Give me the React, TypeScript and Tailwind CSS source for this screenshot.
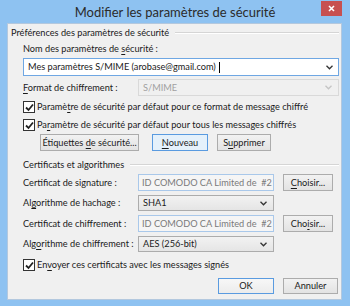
import type { ReactNode } from 'react';

const font = "font-['Lato','Liberation_Sans',sans-serif]";

function Chevron({ color = '#333' }: { color?: string }) {
  return (
    <svg width="7" height="5" viewBox="0 0 7 5" className="shrink-0">
      <polyline points="0.5,0.8 3.5,3.8 6.5,0.8" fill="none" stroke={color} strokeWidth="1.3" />
    </svg>
  );
}

function CheckBox({ children }: { children: ReactNode }) {
  return (
    <div className="flex items-center h-[16px] pl-[15px]">
      <div className="w-[12px] h-[12px] border border-[#333] bg-white flex items-center justify-center">
        <svg width="9" height="9" viewBox="0 0 9 9">
          <polyline points="1,4.5 3.5,7 8,1.5" fill="none" stroke="#222" strokeWidth="1.8" />
        </svg>
      </div>
      <span className="ml-[2px] whitespace-nowrap">{children}</span>
    </div>
  );
}

function Button({
  children,
  width,
  isDefault,
}: {
  children: ReactNode;
  width: string;
  isDefault?: boolean;
}) {
  return (
    <div
      className={`${width} h-full flex items-center justify-center whitespace-nowrap border ${
        isDefault
          ? 'border-[#5a9be0] bg-[#e5f1fb]'
          : 'border-[#acacac] bg-linear-to-b from-[#f2f2f2] to-[#e3e3e3]'
      }`}
    >
      {children}
    </div>
  );
}

function GroupTitle({ children, indent }: { children: ReactNode; indent: string }) {
  return (
    <div className={`flex items-center h-[12px] ${indent} pr-[2px]`}>
      <span className="whitespace-nowrap">{children}</span>
      <div className="flex-1 ml-[6px] h-[2px] border-t border-[#d5d5d5] border-b border-b-white" />
    </div>
  );
}

function ReadOnlyField({ text }: { text: string }) {
  return (
    <div className="w-[136px] h-full border border-[#a9c8ea] bg-[#f5f5f5] text-[#7a7a7a] flex items-center pl-[3px] whitespace-pre">
      {text}
    </div>
  );
}

function Select({ text }: { text: string }) {
  return (
    <div className="w-[136px] h-full border border-[#acacac] bg-linear-to-b from-[#f2f2f2] to-[#e5e5e5] flex items-center pl-[4px] pr-[6px]">
      <span className="flex-1 whitespace-nowrap">{text}</span>
      <Chevron />
    </div>
  );
}

export default function App() {
  return (
    <div className={`w-[350px] h-[306px] bg-[#8ec2f1] flex flex-col ${font}`}>
      <div className="relative h-[23px] flex items-center justify-center">
        <span className="text-[13px] text-[#2b2b2b] mt-[2px]">
          Modifier les paramètres de sécurité
        </span>
        <div className="absolute right-[8px] top-[1px] w-[21px] h-[15px] bg-[#c75050] flex items-center justify-center">
          <svg width="7" height="7" viewBox="0 0 7 7">
            <path d="M1 1L6 6M6 1L1 6" stroke="#fff" strokeWidth="1.6" />
          </svg>
        </div>
      </div>

      <div className="ml-[7px] mr-[8px] h-[277px] bg-[#f0f0f0] border border-[#b3c8de] text-[9.2px] text-[#1a1a1a] flex flex-col">
        <div className="mt-[3px]">
          <GroupTitle indent="pl-[3px]">Préférences des paramètres de sécurité</GroupTitle>
        </div>

        <div className="mt-[4px] h-[12px] pl-[15px] flex items-center">
          <span>
            Nom des paramètres de <u className="underline-offset-2">s</u>écurité :
          </span>
        </div>

        <div className="mt-[3px] ml-[15px] mr-[2px] h-[18px] border border-[#6fa7e3] bg-white flex items-center pl-[4px] pr-[5px]">
          <span className="whitespace-nowrap">Mes paramètres S/MIME (arobase@gmail.com)</span>
          <span className="ml-[3px] w-px h-[11px] bg-black" />
          <span className="flex-1" />
          <Chevron />
        </div>

        <div className="mt-[3px] h-[17px] pl-[15px] pr-[2px] flex items-center">
          <span className="w-[115px]">
            <u className="underline-offset-2">F</u>ormat de chiffrement :
          </span>
          <div className="flex-1 h-full border border-[#d9d9d9] bg-[#f0f0f0] text-[#a0a0a0] flex items-center pl-[4px] pr-[6px]">
            <span className="flex-1">S/MIME</span>
            <Chevron color="#c4c4c4" />
          </div>
        </div>

        <div className="mt-[3px]">
          <CheckBox>
            Paramè<u className="underline-offset-2">t</u>re de sécurité par défaut pour ce format de message chiffré
          </CheckBox>
        </div>
        <div className="mt-[2px]">
          <CheckBox>
            Pa<u className="underline-offset-2">r</u>amètre de sécurité par défaut pour tous les messages chiffrés
          </CheckBox>
        </div>

        <div className="mt-[1px] h-[17px] pl-[32px] flex items-center">
          <Button width="w-[99px]">
            <span>
              Étiquettes <u className="underline-offset-2">d</u>e sécurité...
            </span>
          </Button>
          <div className="ml-[13px] h-full">
            <Button width="w-[56px]" isDefault>
              <span>
                <u className="underline-offset-2">N</u>ouveau
              </span>
            </Button>
          </div>
          <div className="ml-[9px] h-full">
            <Button width="w-[54px]">
              <span>
                S<u className="underline-offset-2">u</u>pprimer
              </span>
            </Button>
          </div>
        </div>

        <div className="mt-[8px]">
          <GroupTitle indent="pl-[15px]">Certificats et algorithmes</GroupTitle>
        </div>

        <div className="mt-[3px] h-[17px] pl-[15px] flex items-center">
          <span className="w-[115px] whitespace-nowrap">Certificat de signature :</span>
          <ReadOnlyField text="ID COMODO CA Limited de  #2" />
          <div className="ml-[9px] h-full">
            <Button width="w-[50px]">
              <span>
                <u className="underline-offset-2">C</u>hoisir...
              </span>
            </Button>
          </div>
        </div>

        <div className="mt-[4px] h-[16px] pl-[15px] flex items-center">
          <span className="w-[115px] whitespace-nowrap">
            Al<u className="underline-offset-2">g</u>orithme de hachage :
          </span>
          <Select text="SHA1" />
        </div>

        <div className="mt-[4px] h-[17px] pl-[15px] flex items-center">
          <span className="w-[115px] whitespace-nowrap">Certificat de chiffrement :</span>
          <ReadOnlyField text="ID COMODO CA Limited de  #2" />
          <div className="ml-[9px] h-full">
            <Button width="w-[50px]">
              <span>
                Cho<u className="underline-offset-2">i</u>sir...
              </span>
            </Button>
          </div>
        </div>

        <div className="mt-[4px] h-[16px] pl-[15px] flex items-center">
          <span className="w-[115px] whitespace-nowrap">
            Alg<u className="underline-offset-2">o</u>rithme de chiffrement :
          </span>
          <Select text="AES (256-bit)" />
        </div>

        <div className="mt-[5px]">
          <CheckBox>
            En<u className="underline-offset-2">v</u>oyer ces certificats avec les messages signés
          </CheckBox>
        </div>

        <div className="mt-[5px] h-[16px] pr-[3px] flex items-center justify-end gap-[9px]">
          <div className="h-full w-[56px] flex items-center justify-center border border-[#5a9be0] bg-linear-to-b from-[#f7f7f7] to-[#ececec]">
            OK
          </div>
          <Button width="w-[55px]">Annuler</Button>
        </div>
      </div>
    </div>
  );
}
